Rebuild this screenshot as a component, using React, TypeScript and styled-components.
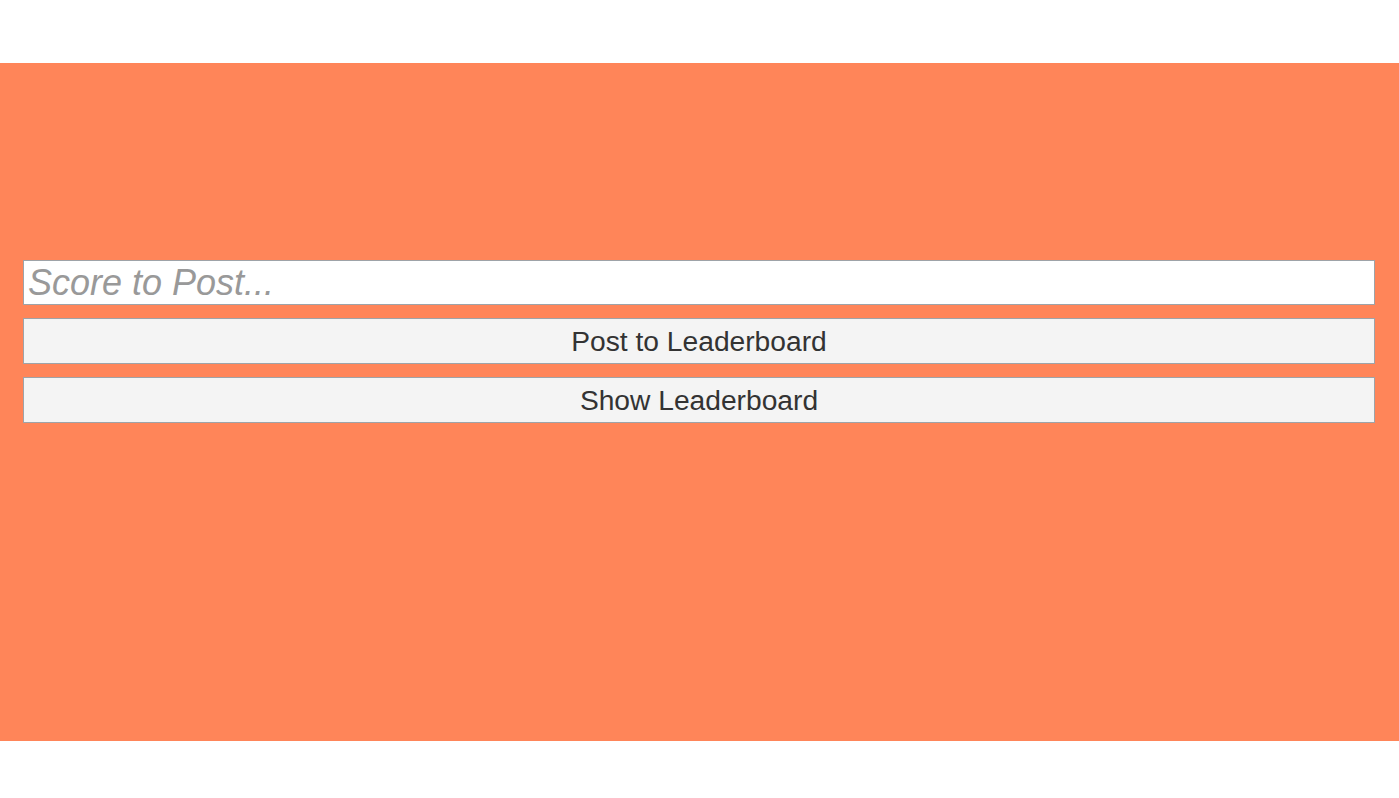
import styled, { createGlobalStyle } from 'styled-components'

const GlobalStyle = createGlobalStyle`
    html, body {
        margin: 0;
        padding: 0;
        background: #fff;
        font-family: "Liberation Sans", Arial, sans-serif;
    }
`

const Page = styled.div`
    padding: 63px 0 57px;
`

const Stage = styled.div`
    height: 678px;
    background-color: #ff8559;
    padding: 197px 24px 0 23px;
    box-sizing: border-box;
    display: flex;
    flex-direction: column;
    gap: 13px;
`

const ScoreInput = styled.input`
    height: 45px;
    box-sizing: border-box;
    width: 100%;
    margin: 0;
    padding: 1px 4px;
    border: 1px solid #9ea3a8;
    background: #fff;
    font-family: "Liberation Sans", Arial, sans-serif;
    font-size: 36px;
    color: #333;
    outline: none;

    &::placeholder {
        color: #999;
        font-style: italic;
    }
`

const Button = styled.button`
    height: 46px;
    box-sizing: border-box;
    width: 100%;
    margin: 0;
    padding: 0;
    border: 1px solid #9ea3a8;
    background-color: #f4f4f4;
    color: #333;
    font-family: "Liberation Sans", Arial, sans-serif;
    font-size: 28.2px;
    cursor: pointer;
`

export default function App() {
    return (
        <Page>
            <GlobalStyle />
            <Stage>
                <ScoreInput type="text" placeholder="Score to Post..." />
                <Button>Post to Leaderboard</Button>
                <Button>Show Leaderboard</Button>
            </Stage>
        </Page>
    )
}
